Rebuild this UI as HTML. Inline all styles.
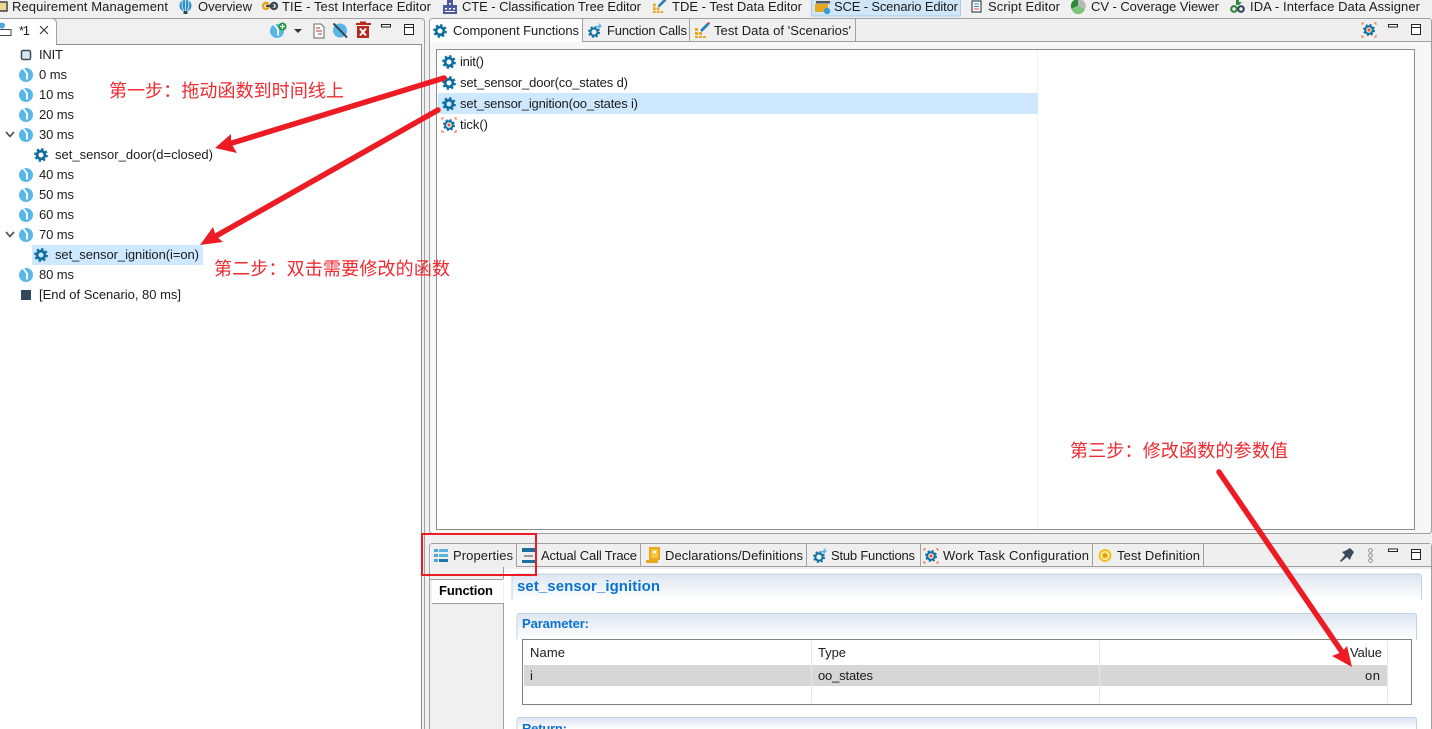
<!DOCTYPE html>
<html><head><meta charset="utf-8"><style>
html,body{margin:0;padding:0;background:#f0f0f0;width:1432px;height:729px;overflow:hidden}
svg{display:block}
text{font-family:"Liberation Sans","Noto Sans CJK SC",sans-serif;font-size:13px;fill:#1c1c1c}
.cn{font-size:18px;fill:#ee2a30}
</style></head><body>
<svg width="1432" height="729" viewBox="0 0 1432 729" xmlns="http://www.w3.org/2000/svg">
<defs>
<linearGradient id="g" x1="0" y1="0" x2="0" y2="1"><stop offset="0" stop-color="#dde5f1"/><stop offset="1" stop-color="#fff"/></linearGradient>
<symbol id="gear" viewBox="-8 -8 16 16" width="16" height="16" overflow="visible">
<circle r="5.6" fill="none" stroke="#0f6f9f" stroke-width="2.6" stroke-dasharray="2.2 2.2"/><circle r="3.9" fill="none" stroke="#0f6f9f" stroke-width="2.8"/></symbol>
<symbol id="gearx" viewBox="-8 -8 16 16" width="16" height="16" overflow="visible">
<path d="M-7 -5V-7H-5M5 -7H7V-5M7 5V7H5M-5 7H-7V5" fill="none" stroke="#f0825a" stroke-width="1.2"/>
<circle r="5" fill="none" stroke="#0f6f9f" stroke-width="2" stroke-dasharray="2 2"/><circle r="3.8" fill="none" stroke="#0f6f9f" stroke-width="2"/><circle r="1.6" fill="#ee5a30"/></symbol>
<symbol id="gearc" viewBox="-8 -8 16 16" width="16" height="16" overflow="visible">
<circle cy="1" r="5" fill="none" stroke="#0f6f9f" stroke-width="2" stroke-dasharray="2 2"/><circle cy="1" r="3.6" fill="none" stroke="#0f6f9f" stroke-width="2"/><path d="M1 -3L5 -6.500V-8L8 -5L5 -2V-3.500Z" fill="#6cb8ea"/></symbol>
<symbol id="clock" viewBox="-8 -8 16 16" width="16" height="16" overflow="visible">
<circle r="7" fill="#58b7e6"/><path d="M-3 -7L1 -1.500L1 4.500" fill="none" stroke="#fff" stroke-width="1.800"/></symbol>
<symbol id="tde" viewBox="0 0 16 16" width="16" height="16" overflow="visible">
<path d="M1 6h3v3H1zM1 10h3v3H1zM1 14h3v2H1zM5 10h3v3H5zM5 14h3v2H5zM9 14h3v2H9z" fill="#e8a820"/><path d="M6 8L13 1l2 2-7 7z" fill="#2a7fb5"/><path d="M13 1l2 2 1-2-1-1z" fill="#d83a30"/></symbol>
</defs>

<!-- top toolbar -->
<rect x="0" y="0" width="1432" height="18" fill="#f0f0f0"/>
<rect x="811.500" y="-1" width="149" height="17" fill="#cfe5f8" stroke="#a8cbe8"/>
<rect x="-1" y="2" width="8" height="9" fill="#f0d890" stroke="#444" stroke-width="1.500"/>
<text x="12" y="11" textLength="156">Requirement Management</text>
<path d="M185.500 0C178 0 178 9 183 11H188C193 9 193 0 185.500 0Z" fill="#2d8fc8"/><rect x="183.500" y="11" width="4" height="3" fill="#33475b"/><path d="M185.500 0V11M182.500 1Q181 6 184 11M188.500 1Q190 6 187 11" stroke="#dff0fa" fill="none" stroke-width=".8"/>
<text x="198" y="11" textLength="54">Overview</text>
<circle cx="266" cy="6" r="3" fill="none" stroke="#e8a020" stroke-width="2.400"/><circle cx="274" cy="6" r="3" fill="none" stroke="#3b4a5a" stroke-width="2.400"/><rect x="266" y="5" width="8" height="2" fill="#3b4a5a"/>
<text x="282" y="11" textLength="149">TIE - Test Interface Editor</text>
<path d="M443 14V5h4V0h6v5h4v9z" fill="#4a5a9a"/><path d="M445 8h2v1.500h-2zM449 8h2v1.500h-2zM453 8h2v1.500h-2zM449 3h2v1.500h-2zM445 11h10v1h-10z" fill="#fff"/>
<text x="462" y="11" textLength="179">CTE - Classification Tree Editor</text>
<use href="#tde" x="652" y="-2" width="15" height="15"/>
<text x="672" y="11" textLength="130">TDE - Test Data Editor</text>
<rect x="815" y="4" width="13" height="8" fill="#e8a820"/><rect x="816" y="1" width="14" height="2.500" fill="#555"/><circle cx="827" cy="11" r="3.200" fill="#3a9ad8"/>
<text x="834" y="11" textLength="124">SCE - Scenario Editor</text>
<rect x="972" y="1" width="9" height="11" fill="#fff" stroke="#3b4a5a" stroke-width="1.200"/><path d="M974 4h5M974 6.500h5" stroke="#3a80c0"/><path d="M974 9h5" stroke="#d84a30"/>
<text x="988" y="11" textLength="72">Script Editor</text>
<path d="M1078 -1A7 7 0 0 0 1071.500 9L1078 5.500z" fill="#2d8a3a"/><path d="M1078 -1A7 7 0 0 1 1085 9L1078 5.500z" fill="#b8b8b8"/><path d="M1071.500 9A7 7 0 0 0 1085 9L1078 5.500z" fill="#7cc47c"/>
<text x="1091" y="11" textLength="128">CV - Coverage Viewer</text>
<circle cx="1234" cy="9" r="2.800" fill="none" stroke="#2d8a3a" stroke-width="2.200"/><circle cx="1241" cy="9" r="2.800" fill="none" stroke="#3b4a5a" stroke-width="2.200"/><path d="M1236 0h3v2h3l-3 3h-3z" fill="#2d8a3a"/>
<text x="1250" y="11" textLength="170">IDA - Interface Data Assigner</text>

<!-- left panel -->
<path d="M-2 18.500H421Q424.500 18.500 424.500 22V730" fill="#f0f0f0" stroke="#a0a0a0"/>
<rect x="-2" y="45" width="423.500" height="690" fill="#fff"/>
<path d="M56 44.500H421.500V730" fill="none" stroke="#8c8c8c"/>
<path d="M0 19H52Q56 19 56 24V45H0z" fill="#fff"/><path d="M-1 18.500H52Q56.500 18.500 56.500 24V44" fill="none" stroke="#a0a0a0"/>
<path d="M-1 29.500H11V35.500H-1" fill="none" stroke="#3b4a5a"/><circle cx="2" cy="25.500" r="3" fill="#4aa8dc"/>
<text x="19" y="35" textLength="11">*1</text>
<path d="M40 26L48 34M48 26L40 34" stroke="#333" stroke-width="1.100"/>
<use href="#clock" x="269" y="23" width="16" height="16"/><circle cx="282.500" cy="26.500" r="4" fill="#1f9a3a"/><path d="M280 26.500h5M282.500 24v5" stroke="#fff" stroke-width="1.300"/>
<path d="M294 29h8l-4 4z" fill="#333"/>
<path d="M314 24h7l3 3v11h-10z" fill="#fff" stroke="#666"/><path d="M316 28h4M316 31h6M318 34h4" stroke="#b03028"/>
<circle cx="340" cy="30.500" r="7" fill="#58b7e6"/><path d="M333.500 23.500L347 37.500" stroke="#33475b" stroke-width="2"/>
<rect x="357" y="26" width="12" height="12" fill="#b8261e"/><rect x="356" y="23" width="15" height="2" fill="#b8261e"/><rect x="360" y="21.500" width="6" height="1.500" fill="#b8261e"/><path d="M360 28.500L366 35.500M366 28.500L360 35.500" stroke="#fff" stroke-width="2"/>
<rect x="381.500" y="24.500" width="9" height="2.500" fill="#fff" stroke="#222"/>
<rect x="404.500" y="24.500" width="9" height="10" fill="#fff" stroke="#222"/><path d="M404 27.500H414" stroke="#222"/>

<!-- left tree -->
<rect x="21.500" y="50.500" width="9" height="9" rx="1.500" fill="#d7e6f2" stroke="#3b4a5a" stroke-width="1.500"/>
<text x="39" y="59" textLength="24">INIT</text>
<use href="#clock" x="18" y="67" /><text x="39" y="79" textLength="28">0 ms</text>
<use href="#clock" x="18" y="87" /><text x="39" y="99" textLength="35">10 ms</text>
<use href="#clock" x="18" y="107" /><text x="39" y="119" textLength="35">20 ms</text>
<use href="#clock" x="18" y="127" /><text x="39" y="139" textLength="35">30 ms</text>
<path d="M6 132L10 136.500L14 132" fill="none" stroke="#555" stroke-width="1.700"/>
<use href="#gear" x="33" y="147"/><text x="55" y="159" textLength="158">set_sensor_door(d=closed)</text>
<use href="#clock" x="18" y="167" /><text x="39" y="179" textLength="35">40 ms</text>
<use href="#clock" x="18" y="187" /><text x="39" y="199" textLength="35">50 ms</text>
<use href="#clock" x="18" y="207" /><text x="39" y="219" textLength="35">60 ms</text>
<use href="#clock" x="18" y="227" /><text x="39" y="239" textLength="35">70 ms</text>
<path d="M6 232L10 236.500L14 232" fill="none" stroke="#555" stroke-width="1.700"/>
<rect x="32" y="245" width="171" height="20" fill="#cde8ff"/>
<use href="#gear" x="33" y="247"/><text x="55" y="259" textLength="144">set_sensor_ignition(i=on)</text>
<use href="#clock" x="18" y="267" /><text x="39" y="279" textLength="35">80 ms</text>
<rect x="21" y="290" width="10" height="10" fill="#33475b"/>
<text x="39" y="299" textLength="142">[End of Scenario, 80 ms]</text>

<!-- right top panel -->
<rect x="429.500" y="18.500" width="1002" height="515" rx="3" fill="#f7f7f7" stroke="#a0a0a0"/>
<path d="M431 19H1430V41H431z" fill="#efefef"/>
<path d="M582 41.500H1431" stroke="#a0a0a0"/>
<path d="M430 22Q430 19 433 19H580Q582 19 582 22V42H430z" fill="#fff"/><path d="M582.500 19V41M689.500 19V41M855.500 19V41" stroke="#a0a0a0"/>
<use href="#gear" x="432" y="23"/><text x="453" y="35" textLength="126">Component Functions</text>
<use href="#gearc" x="586" y="23"/><text x="607" y="35" textLength="80">Function Calls</text>
<use href="#tde" x="694" y="22"/><text x="714" y="35" textLength="137">Test Data of 'Scenarios'</text>
<use href="#gearx" x="1361" y="22"/>
<rect x="1388.500" y="24.500" width="9" height="2.500" fill="#fff" stroke="#222"/>
<rect x="1411.500" y="24.500" width="9" height="10" fill="#fff" stroke="#222"/><path d="M1411 27.500H1421" stroke="#222"/>

<rect x="436.500" y="49.500" width="978" height="480" fill="#fff" stroke="#8c8c8c"/>
<path d="M1037.500 50V529" stroke="#eef2f6"/>
<rect x="438" y="93" width="600" height="21" fill="#cde8ff"/>
<use href="#gear" x="441" y="54"/><text x="460" y="66" textLength="24">init()</text>
<use href="#gear" x="441" y="75"/><text x="460" y="87" textLength="168">set_sensor_door(co_states d)</text>
<use href="#gear" x="441" y="96"/><text x="460" y="108" textLength="178">set_sensor_ignition(oo_states i)</text>
<use href="#gearx" x="441" y="117"/><text x="460" y="129" textLength="28">tick()</text>

<!-- bottom panel -->
<rect x="429.500" y="543.500" width="1002" height="200" rx="3" fill="#fff" stroke="#a0a0a0"/>
<rect x="431" y="544" width="1000" height="25" fill="#efefef"/>
<rect x="430" y="569" width="74" height="160" fill="#f0f0f0"/>
<path d="M516 566.500H1431" stroke="#a0a0a0"/>
<path d="M516.500 544V566M640.500 544V566M806.500 544V566M920.500 544V566M1092.500 544V566M1203.500 544V566" stroke="#a0a0a0"/>
<path d="M434 549h4v3h-4zM434 554h4v3h-4zM434 559h4v3h-4z" fill="#4aa8dc"/><path d="M439 549h9v3h-9zM439 554h9v3h-9z" fill="#5ab4e0"/><path d="M439 559h9v3h-9z" fill="#1a7aa8"/>
<text x="453" y="560" textLength="60">Properties</text>
<rect x="522" y="548" width="13" height="4" fill="#1a6f9c"/><rect x="522" y="560" width="13" height="3" fill="#1a6f9c"/><path d="M524 556h9" stroke="#33475b"/>
<text x="541" y="560" textLength="96">Actual Call Trace</text>
<path d="M650 548h9v11h-9z" fill="#f5c842" stroke="#e8a820" stroke-width="2"/><path d="M653 551h3v2h-3z" fill="#fff"/><path d="M646 560h12v3h-12z" fill="#e8a820"/>
<text x="665" y="560" textLength="138">Declarations/Definitions</text>
<use href="#gearc" x="811" y="548"/><text x="831" y="560" textLength="84">Stub Functions</text>
<use href="#gearx" x="923" y="548"/><text x="943" y="560" textLength="146">Work Task Configuration</text>
<circle cx="1105" cy="555.500" r="6.500" fill="#f2c320"/><circle cx="1105" cy="555.500" r="3.800" fill="none" stroke="#fff"/><circle cx="1105" cy="555.500" r="1.800" fill="#d89a10"/>
<text x="1117" y="560" textLength="83">Test Definition</text>
<path d="M1340 561L1345 555L1342 552L1345 551L1350 548L1354 552L1351 557L1350 560L1347 557L1341 562z" fill="#3b4a5a"/>
<circle cx="1370.500" cy="550.500" r="1.800" fill="#fff" stroke="#888"/><circle cx="1370.500" cy="555.500" r="1.800" fill="#fff" stroke="#888"/><circle cx="1370.500" cy="560.500" r="1.800" fill="#fff" stroke="#888"/>
<rect x="1388.500" y="549" width="9" height="2.500" fill="#fff" stroke="#222"/>
<rect x="1411.500" y="549.500" width="9" height="10" fill="#fff" stroke="#222"/><path d="M1411 552.500H1421" stroke="#222"/>

<!-- properties left -->
<rect x="432" y="580" width="71" height="23" fill="#fff"/>
<path d="M430 579.500H503M432 603.500H503" stroke="#a0a0a0"/>
<path d="M503.500 567V579M503.500 603V729" stroke="#a0a0a0"/>
<text x="439" y="595" textLength="54" style="font-weight:bold;fill:#000">Function</text>

<!-- form -->
<rect x="512" y="574" width="909" height="26" fill="url(#g)"/>
<path d="M512 600V577Q512 574 515 574H1419Q1421.500 574 1421.500 577V600" fill="none" stroke="#bfd3e4"/>
<text x="517" y="591" textLength="143" style="font-size:15px;font-weight:bold;fill:#0a72d0">set_sensor_ignition</text>
<rect x="517" y="614" width="900" height="25" fill="url(#g)"/>
<path d="M517 640V616Q517 613.500 520 613.500H1414Q1416.500 613.500 1416.500 616V640" fill="none" stroke="#bfd3e4"/>
<text x="522" y="628" textLength="67" style="font-weight:bold;fill:#0a72d0;font-size:13px">Parameter:</text>
<rect x="522.500" y="639.500" width="889" height="65" fill="#fff" stroke="#808080"/>
<rect x="524" y="665" width="864" height="21" fill="#d6d6d6"/>
<path d="M811.500 641V703M1099.500 641V703M1387.500 641V703" stroke="#e4e8ee"/>
<text x="530" y="657" textLength="35">Name</text><text x="818" y="657" textLength="28">Type</text><text x="1350" y="657" textLength="32">Value</text>
<text x="530" y="680" textLength="3">i</text><text x="818" y="680" textLength="55">oo_states</text><text x="1365" y="680" textLength="15">on</text>
<rect x="517" y="718" width="900" height="11" fill="url(#g)"/>
<path d="M517 729V720Q517 717.500 520 717.500H1414Q1416.500 717.500 1416.500 720V729" fill="none" stroke="#bfd3e4"/>
<text x="522" y="733" textLength="45" style="font-weight:bold;fill:#0a72d0;font-size:13px">Return:</text>

<!-- annotations -->
<rect x="422" y="534" width="114" height="41" fill="none" stroke="#ed1c24" stroke-width="2"/>
<text class="cn" x="109" y="97" textLength="235">第一步：拖动函数到时间线上</text>
<text class="cn" x="214" y="275" textLength="236">第二步：双击需要修改的函数</text>
<text class="cn" x="1070" y="457" textLength="218">第三步：修改函数的参数值</text>
<g stroke="#ed1c24" stroke-linecap="round" fill="none">
<path d="M444 78L232 143" stroke-width="5.500"/>
<path d="M438 110L216 236" stroke-width="5.500"/>
<path d="M1219 472L1342 652" stroke-width="5.500"/>
</g>
<g fill="#ed1c24">
<path d="M215 148L231 134L231 143L237 153z"/>
<path d="M200 245L213 227L216 236L223 242z"/>
<path d="M1352 667L1332 656L1342 652L1347 646z"/>
</g>
</svg>
</body></html>
